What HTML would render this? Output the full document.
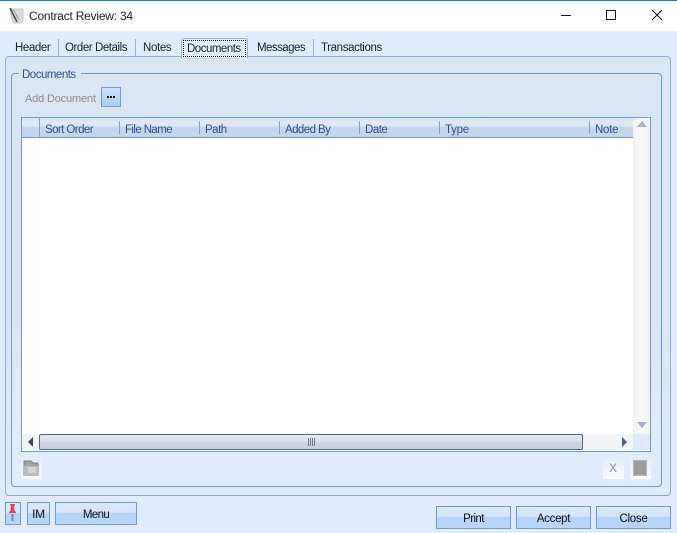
<!DOCTYPE html>
<html><head><meta charset="utf-8"><style>
html,body{margin:0;padding:0;background:#e0ebfc}
#r{position:relative;width:677px;height:533px;overflow:hidden;background:#e0ebfc;font-family:"Liberation Sans",sans-serif;font-size:11.5px;color:#15233c}
#r div,#r span.t{position:absolute;box-sizing:border-box}
.t{white-space:nowrap;line-height:14px;display:block}
.h{color:#2f4f91;top:123px}
.v{width:1px;background:#7da2d6}
.tabv{width:1px;background:#8fb2e0;top:39px;height:17px}
.btn{border:1px solid #6b9ad6;background:linear-gradient(#dce9fb 0,#d5e5fb 45%,#b5d2f8 50%,#b9d5fa 100%);text-align:center;color:#111;line-height:24px}
</style></head><body><div id="r">
<div style="left:0;top:0;width:677px;height:31px;background:#fff"></div>
<div style="left:0;top:0;width:677px;height:1px;background:#0a84d8"></div>
<svg style="position:absolute;left:8px;top:7px" width="17" height="18" viewBox="0 0 17 18"><path d="M2 2h13v12l-2 2H5z" fill="#dcdcdc" stroke="#c4c4c4"/><path d="M2 1l7 14" stroke="#44505e" stroke-width="1.6"/><path d="M5 2l6 11" stroke="#9aa2aa" stroke-width="1"/></svg>
<span class="t" style="left:29px;top:9px;color:#222;font-size:12px;letter-spacing:-.22px">Contract Review: 34</span>
<svg style="position:absolute;left:550px;top:5px" width="127" height="22" viewBox="0 0 127 22"><path d="M11 10.5h10" stroke="#111" fill="none"/><rect x="56.5" y="5.500" width="9" height="9" fill="none" stroke="#111"/><path d="M102 5l10 10M112 5l-10 10" stroke="#111" fill="none"/></svg>

<span class="t" style="left:15px;top:41px;letter-spacing:-.4px">Header</span>
<div class="tabv" style="left:58px"></div>
<span class="t" style="left:65px;top:41px;letter-spacing:-.44px">Order Details</span>
<div class="tabv" style="left:135px"></div>
<span class="t" style="left:143px;top:41px;letter-spacing:-.35px">Notes</span>
<span class="t" style="left:257px;top:41px;letter-spacing:-.55px">Messages</span>
<div class="tabv" style="left:313px"></div>
<span class="t" style="left:321px;top:41px;letter-spacing:-.38px">Transactions</span>

<div style="left:5px;top:56px;width:666px;height:440px;border:1px solid #8cb0e2;border-bottom-color:#8ea6c8;border-radius:4px;background:linear-gradient(#dbe6f4 0,#dbe6f4 60%,#e0ebfc 85%)"></div>
<div style="left:181px;top:38px;width:67px;height:20px;background:#e4eefb;border:1px solid #8cb0e2;border-bottom:0;border-radius:3px 3px 0 0"></div>
<div style="left:183px;top:40px;width:63px;height:17px;border:1px dotted #111"></div>
<span class="t" style="left:187px;top:42px;letter-spacing:-.5px">Documents</span>

<div style="left:11px;top:73px;width:651px;height:414px;border:1px solid #6b9ad6;border-radius:4px"></div>
<div style="left:19px;top:68px;width:62px;height:12px;background:#dbe6f4"></div>
<span class="t" style="left:22px;top:68px;color:#2f4f91;letter-spacing:-.5px">Documents</span>

<span class="t" style="left:25px;top:92px;color:#8b8b8b;font-size:11px;letter-spacing:-.17px">Add Document</span>
<div style="left:101px;top:87px;width:20px;height:20px;border:1px solid #6b9ad6;background:linear-gradient(#cfe0f9,#aecdf7)"></div>
<div style="left:107px;top:96px;width:2px;height:2px;background:#111"></div>
<div style="left:110px;top:96px;width:2px;height:2px;background:#111"></div>
<div style="left:113px;top:96px;width:2px;height:2px;background:#111"></div>

<div style="left:21px;top:117px;width:630px;height:335px;border:1px solid #6b9ad6;background:#fff"></div>
<div style="left:22px;top:118px;width:611px;height:20px;border-bottom:1px solid #6b9ad6;background:linear-gradient(#dbe6f4 0,#e1e9f5 40%,#c6d6ec 50%,#c4d5ec 100%)"></div>
<div class="v" style="left:39px;top:118px;height:20px"></div>
<div class="v" style="left:119px;top:121px;height:13px"></div>
<div class="v" style="left:199px;top:121px;height:13px"></div>
<div class="v" style="left:279px;top:121px;height:13px"></div>
<div class="v" style="left:359px;top:121px;height:13px"></div>
<div class="v" style="left:439px;top:121px;height:13px"></div>
<div class="v" style="left:589px;top:121px;height:13px"></div>
<span class="t h" style="left:45px;letter-spacing:-.57px">Sort Order</span>
<span class="t h" style="left:125px;letter-spacing:-.6px">File Name</span>
<span class="t h" style="left:205px;letter-spacing:-.5px">Path</span>
<span class="t h" style="left:285px;letter-spacing:-.57px">Added By</span>
<span class="t h" style="left:365px;letter-spacing:-.5px">Date</span>
<span class="t h" style="left:445px;letter-spacing:-.25px">Type</span>
<span class="t h" style="left:595px;letter-spacing:-.25px">Note</span>

<div style="left:633px;top:118px;width:17px;height:316px;background:linear-gradient(90deg,#f0f0f2,#f9f9fa 50%,#f3f3f5)"></div>
<svg style="position:absolute;left:633px;top:118px" width="17" height="316"><path d="M9 3l5 6H4z" fill="#a4aecd"/><path d="M9 310l5-6H4z" fill="#a4aecd"/></svg>
<div style="left:22px;top:434px;width:611px;height:16px;background:#f2f3f5"></div>
<div style="left:633px;top:434px;width:17px;height:16px;background:#deeafb"></div>
<svg style="position:absolute;left:22px;top:434px" width="611" height="16"><path d="M6 8l5-5v10z" fill="#33486f"/><path d="M600 3l5 5-5 5z" fill="#4b5f85"/></svg>
<div style="left:39px;top:434px;width:544px;height:16px;border:1px solid #4f6797;border-radius:2px;background:linear-gradient(#e3e8ef 0,#dee4ec 40%,#cdd6e1 55%,#c7d0dc 100%)"></div>
<div style="left:308px;top:438px;width:1px;height:8px;background:#6d7684"></div>
<div style="left:310px;top:438px;width:1px;height:8px;background:#6d7684"></div>
<div style="left:312px;top:438px;width:1px;height:8px;background:#6d7684"></div>
<div style="left:314px;top:438px;width:1px;height:8px;background:#6d7684"></div>

<div style="left:21px;top:458px;width:21px;height:21px;background:linear-gradient(#e3edfc,#f6f9fe)"></div>
<svg style="position:absolute;left:21px;top:458px" width="21" height="21"><path d="M3 3h7l2 2h5v12H3z" fill="#a2a2a2" stroke="#7f7f7f"/><path d="M3 8h14v9H3z" fill="#bdbdbd"/><rect x="7" y="9" width="8" height="6" fill="#d4d4d4"/></svg>
<div style="left:603px;top:458px;width:21px;height:21px;background:linear-gradient(#e3edfc,#f8fafe)"></div>
<span class="t" style="left:609px;top:461px;color:#8e8e8e;font-size:12px">X</span>
<div style="left:630px;top:458px;width:21px;height:21px;background:linear-gradient(#e3edfc,#f8fafe)"></div>
<div style="left:633px;top:460px;width:14px;height:16px;background:#9c9c9c;border:1px solid #b4b4b4"></div>

<div class="btn" style="left:5px;top:502px;width:16px;height:23px"></div>
<svg style="position:absolute;left:5px;top:502px" width="16" height="23"><path d="M5 2h5v1.500h-1l.5 5 1.500 1.500v1H4v-1l1.500-1.500.5-5H5z" fill="#d8464e"/><path d="M7.500 12v7" stroke="#848c96" stroke-width="2"/></svg>
<div class="btn" style="left:27px;top:502px;width:23px;height:23px;line-height:22px;font-size:12px;letter-spacing:-.3px">IM</div>
<div class="btn" style="left:55px;top:502px;width:82px;height:23px;line-height:24px;letter-spacing:-.6px">Menu</div>
<div class="btn" style="left:436px;top:506px;width:75px;height:23px;line-height:24px;letter-spacing:-.6px">Print</div>
<div class="btn" style="left:516px;top:506px;width:75px;height:23px;line-height:24px;letter-spacing:-.3px">Accept</div>
<div class="btn" style="left:596px;top:506px;width:75px;height:23px;line-height:24px;letter-spacing:-.3px">Close</div>
</div></body></html>
